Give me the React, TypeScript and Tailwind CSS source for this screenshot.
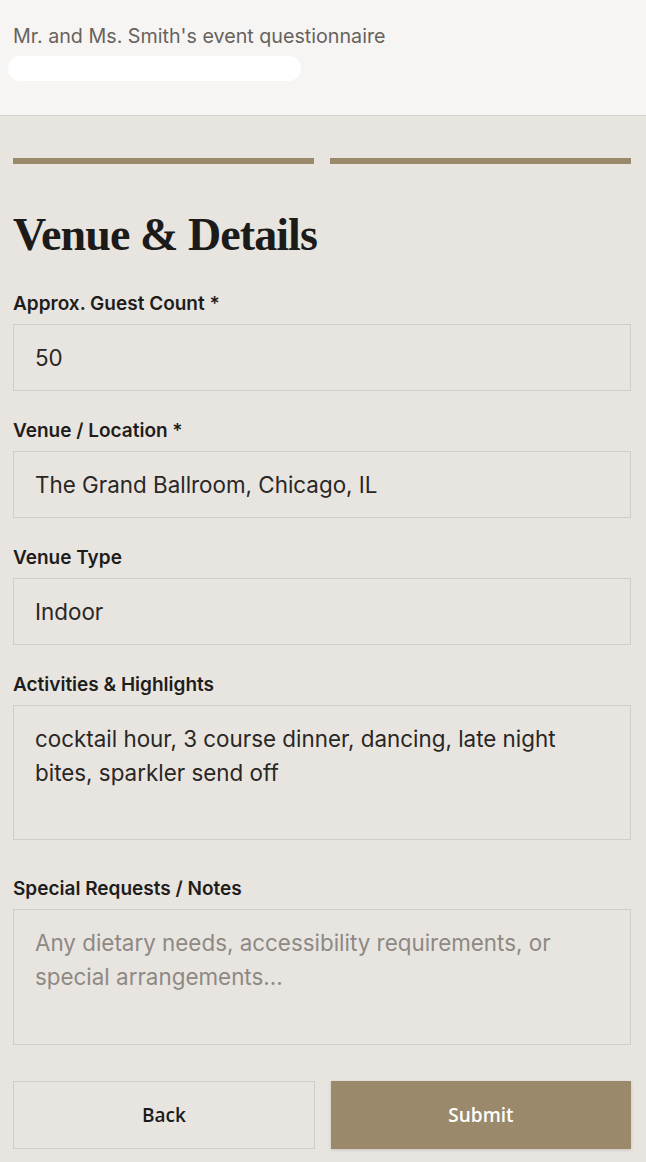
import React from "react";

const body = "font-['Inter','Liberation_Sans',sans-serif]";

function Field({ label, children }: { label: string; children: React.ReactNode }) {
  return (
    <div className="flex flex-col">
      <label className="mb-2 text-[19px] leading-6 font-semibold text-[#1f1d1b]">{label}</label>
      {children}
    </div>
  );
}

const boxCls =
  "w-full border border-[#d1cdc7] bg-[#e8e5e0] px-[21px] py-4 text-[22.4px] leading-[34px] text-[#2a2725] outline-none placeholder:text-[#8e8984]";

export default function App() {
  return (
    <div className={`min-h-screen bg-[#e8e5e0] ${body}`}>
      <header className="h-[116px] border-b border-[#d6d2cc] bg-[#f6f5f3] pl-[13px] pr-[15px] pt-[24px]">
        <p className="text-[19.7px] leading-6 text-[#67625d]">Mr. and Ms. Smith's event questionnaire</p>
        <div className="-ml-[5px] mt-2 h-[25px] w-[293px] rounded-full bg-white" />
      </header>

      <main className="pl-[13px] pr-[15px] pt-[42px] pb-[14px]">
        <div className="flex gap-4">
          <div className="h-[6px] flex-1 bg-[#9b896c]" />
          <div className="h-[6px] flex-1 bg-[#9b896c]" />
        </div>

        <h1 className="mt-[43px] font-['Liberation_Serif',serif] text-[46px] leading-[55px] font-bold tracking-[-0.02em] text-[#1c1b1a]">
          Venue &amp; Details
        </h1>

        <form className="mt-[30px] flex flex-col gap-[28px]">
          <Field label="Approx. Guest Count *">
            <input className={`${boxCls} h-[67px]`} defaultValue="50" />
          </Field>
          <Field label="Venue / Location *">
            <input className={`${boxCls} h-[67px]`} defaultValue="The Grand Ballroom, Chicago, IL" />
          </Field>
          <Field label="Venue Type">
            <div className={`${boxCls} h-[67px]`}>Indoor</div>
          </Field>
          <Field label="Activities & Highlights">
            <textarea
              className={`${boxCls} block h-[135px] resize-none`}
              defaultValue="cocktail hour, 3 course dinner, dancing, late night bites, sparkler send off"
            />
          </Field>
          <div className="mt-[9px]">
            <Field label="Special Requests / Notes">
              <textarea
                className={`${boxCls} block h-[136px] resize-none`}
                placeholder="Any dietary needs, accessibility requirements, or special arrangements..."
              />
            </Field>
          </div>

          <div className="mt-[8px] flex gap-4">
            <button
              type="button"
              className="h-[68px] flex-1 border border-[#d1cdc7] bg-[#e8e5e0] font-['Open_Sans',sans-serif] text-[19px] font-semibold text-[#1c1b1a]"
            >
              Back
            </button>
            <button
              type="button"
              className="h-[68px] flex-1 bg-[#9b896c] font-['Open_Sans',sans-serif] text-[19px] font-semibold text-white shadow-[0_1px_3px_rgba(0,0,0,0.15)]"
            >
              Submit
            </button>
          </div>
        </form>
      </main>
    </div>
  );
}
